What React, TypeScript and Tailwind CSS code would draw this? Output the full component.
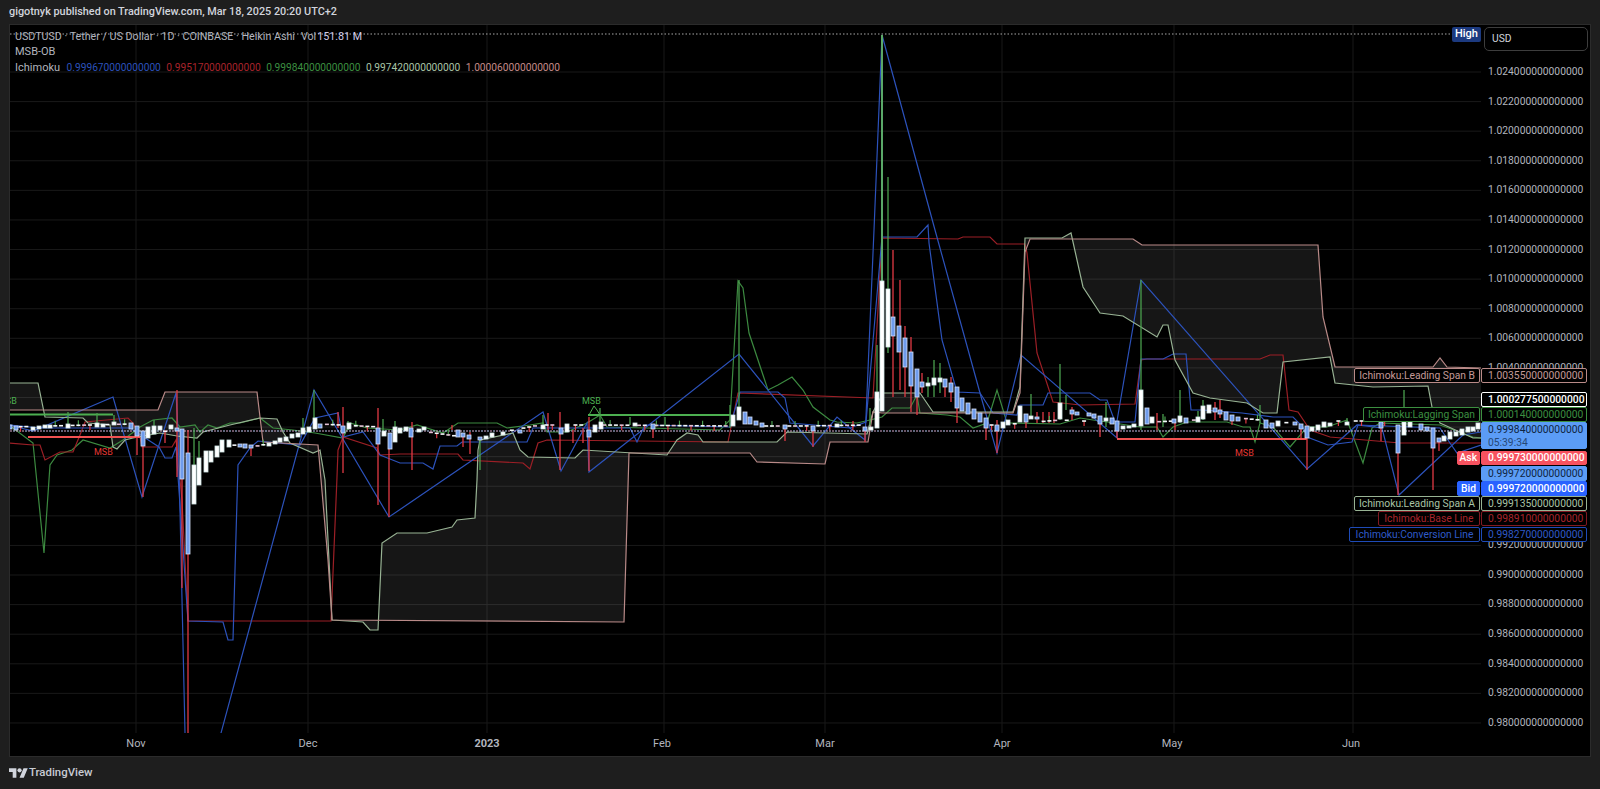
// App.tsx - published TradingView chart snapshot, USDTUSD with Ichimoku
import React from "react";

type Pt = string;

const SPAN_A: Pt =
  "9,383 38,383 45,417 83,418 88,423 110,425 113,447 117,449 125,440 133,438 160,433 177,436 197,438 203,432 230,425 260,418 277,419 283,432 290,443 313,453 320,450 325,480 332,620 363,622 370,630 378,630 382,543 397,533 427,533 452,527 457,520 475,518 477,480 478,450 480,440 513,433 520,450 528,457 575,458 583,450 667,455 677,440 687,433 698,435 703,442 777,442 787,432 867,434 873,412 883,393 920,393 933,412 1013,412 1020,387 1025,238 1062,238 1071,233 1083,287 1100,313 1123,316 1157,337 1163,325 1168,325 1175,360 1193,393 1210,398 1247,403 1263,413 1277,413 1283,362 1330,357 1335,383 1373,387 1428,386 1432,407 1440,423 1473,438 1481,438";
const SPAN_B: Pt =
  "9,410 158,410 165,392 257,392 263,442 318,445 328,560 332,620 624,622 629,453 650,453 750,453 757,462 825,464 830,442 868,442 873,412 882,413 1013,413 1020,393 1025,252 1030,239 1133,239 1142,245 1318,245 1323,317 1335,367 1433,367 1440,358 1447,367 1481,368";
const BASE: Pt =
  "9,443 33,445 40,445 45,460 60,452 73,452 80,435 85,422 128,418 133,423 140,437 142,447 172,447 176,440 182,500 188,621 331,621 337,477 338,450 343,437 377,448 380,455 400,454 458,454 463,460 523,463 530,469 538,443 547,440 728,442 738,393 873,398 882,238 958,239 963,237 990,237 997,244 1025,244 1027,253 1037,353 1053,402 1080,405 1135,404 1141,360 1147,359 1260,359 1270,355 1283,355 1289,410 1298,412 1308,427 1310,430 1330,437 1400,443 1481,443";
const LAGGING: Pt =
  "9,425 33,443 44,553 50,465 57,455 72,450 83,440 110,448 123,440 140,427 153,420 172,418 180,427 195,425 200,432 208,425 217,428 230,423 240,423 260,418 273,428 293,430 315,433 343,438 350,423 367,428 400,430 417,425 443,433 458,423 497,423 507,428 530,425 543,423 547,432 567,432 587,423 600,415 607,427 720,430 730,420 738,281 743,288 749,333 768,390 778,385 792,377 803,390 813,407 830,420 837,422 857,423 870,420 882,417 892,408 910,408 917,395 920,413 947,415 960,417 973,428 987,423 997,390 1007,423 1060,424 1080,418 1093,420 1107,422 1140,427 1157,427 1163,437 1173,427 1187,422 1227,422 1243,427 1250,427 1255,442 1260,423 1273,427 1290,447 1307,427 1327,427 1347,420 1363,463 1372,428 1380,423 1440,425 1473,437 1481,438";
const ZIGZAG: Pt =
  "9,425 33,431 113,397 142,497 176,393 178,430 180,510 185,733 185,760 221,760 221,733 314,390 389,517 543,412 561,471 587,423 589,472 739,354 813,446 837,417 850,428 865,440 874,230 882,35 935,230 980,393 997,453 1021,355 1117,438 1117,421 1141,280 1307,469 1357,425 1382,428 1399,495 1463,435 1481,432";
const STEPPED: Pt =
  "9,425 40,428 130,428 159,447 165,458 172,458 176,447 188,621 223,622 228,640 233,640 238,465 250,448 258,441 300,445 315,418 338,413 343,437 363,432 380,455 400,463 423,463 433,469 440,446 457,446 462,442 527,442 533,428 630,428 637,442 645,425 730,427 740,392 778,392 785,398 790,423 850,428 866,422 882,237 917,237 928,225 929,243 942,340 957,392 980,393 993,413 1017,415 1020,405 1043,405 1048,393 1067,393 1090,393 1100,400 1107,400 1115,422 1135,422 1141,359 1163,359 1173,354 1186,354 1191,410 1203,410 1242,413 1273,417 1293,417 1303,427 1307,437 1328,445 1352,442 1358,425 1440,428 1450,443 1457,453 1481,445";

// [x, top, bottom] in page pixels
const UP: number[][] = [
  [33,427,430],[39,426,429],[45,425,428],[50,425,428],[68,424,428],[97,423,427],[103,424,427],[114,422,425],[148,427,438],[154,426,434],[160,426,430],[171,425,429],[194,465,504],[199,458,485],[206,451,472],[211,451,462],[217,446,457],[222,440,452],[229,440,447],[269,443,446],[275,441,444],[280,438,442],[286,437,441],[292,434,438],[298,433,437],[303,428,434],[309,427,432],[315,418,429],[349,423,429],[384,431,436],[395,427,442],[400,428,433],[406,427,431],[419,429,432],[424,427,430],[486,436,439],[492,433,437],[503,432,435],[543,425,429],[567,424,432],[595,425,432],[601,422,429],[635,423,426],[733,415,426],[739,407,420],[837,424,427],[871,427,430],[877,392,428],[882,281,411],[888,289,347],[928,383,386],[934,378,385],[940,378,382],[1003,422,428],[1008,420,425],[1020,406,422],[1031,416,419],[1060,403,419],[1106,418,421],[1123,426,429],[1129,426,428],[1134,424,427],[1141,390,426],[1152,417,423],[1180,416,422],[1198,417,422],[1203,406,419],[1209,405,413],[1278,421,426],[1312,427,431],[1318,425,430],[1324,422,427],[1330,423,426],[1347,422,425],[1404,422,435],[1410,422,427],[1444,436,441],[1450,432,439],[1456,432,436],[1462,429,435],[1468,427,432],[1473,427,431],[1478,423,429],
];
const DOWN: number[][] = [
  [10,425,429],[16,426,430],[131,423,429],[137,426,436],[143,431,446],[177,428,431],[182,429,479],[188,453,554],[240,444,447],[245,444,448],[251,445,448],[320,424,428],[343,426,433],[378,428,444],[390,433,449],[411,428,437],[458,430,437],[463,433,437],[469,435,439],[480,437,440],[520,430,433],[561,428,434],[589,430,437],[653,424,429],[745,412,424],[750,417,424],[756,421,425],[762,423,427],[785,425,429],[813,426,431],[865,427,431],[893,317,336],[899,326,352],[905,338,367],[911,352,386],[917,369,397],[922,382,387],[945,379,387],[951,383,392],[957,387,408],[962,398,411],[968,403,414],[974,409,419],[980,413,422],[986,418,428],[997,425,431],[1026,414,422],[1037,417,419],[1072,410,414],[1077,412,415],[1089,413,416],[1094,414,418],[1100,416,424],[1112,418,424],[1117,421,431],[1147,408,424],[1174,419,423],[1186,418,423],[1215,408,412],[1220,410,414],[1226,412,420],[1232,415,421],[1238,417,421],[1266,420,428],[1272,423,428],[1295,422,425],[1301,424,429],[1307,426,438],[1381,422,428],[1398,425,453],[1421,424,430],[1427,427,431],[1433,428,448],[1439,438,442],
];
// [x, y1, y2]
const RED_WICKS: number[][] = [
  [137,436,455],[143,446,497],[165,430,443],[177,390,477],[182,479,588],[188,430,733],[251,448,456],[338,412,428],[343,407,473],[378,408,505],[389,448,517],[412,422,470],[452,425,430],[463,437,447],[470,432,454],[548,413,430],[560,412,470],[573,430,443],[583,428,443],[589,417,471],[653,429,438],[785,429,441],[813,431,447],[853,421,427],[865,431,442],[893,250,397],[900,280,390],[905,326,397],[911,337,412],[917,397,415],[922,373,393],[945,387,397],[951,377,402],[957,408,423],[986,428,440],[997,420,453],[1026,422,428],[1037,412,423],[1043,412,423],[1049,412,423],[1054,412,423],[1072,407,420],[1100,424,437],[1117,431,438],[1157,413,430],[1175,423,430],[1215,402,420],[1220,400,418],[1232,421,425],[1301,429,438],[1307,438,470],[1381,428,441],[1398,453,495],[1433,448,490],[1439,442,451],
];
const GREEN_WICKS: number[][] = [
  [68,412,424],[97,413,423],[114,415,422],[154,420,426],[194,428,465],[199,441,458],[303,418,428],[314,390,420],[348,421,430],[383,419,431],[395,421,427],[480,438,470],[543,415,425],[600,408,422],[630,417,425],[665,417,426],[739,280,407],[730,405,428],[870,408,425],[877,345,392],[888,177,353],[928,377,397],[934,360,397],[940,363,393],[1031,394,417],[1060,364,420],[1066,395,410],[1106,402,427],[1141,280,430],[1163,414,427],[1180,390,423],[1198,411,420],[1203,400,420],[1260,405,423],[1404,390,425],[1347,418,424],
];

// where the flat doji candles sit, by x
const FLOOR = [[9,427],[130,424],[230,445],[260,446],[320,424],[400,428],[470,438],[540,425],[600,425],[730,426],[800,426],[870,425],[1000,425],[1060,420],[1130,423],[1240,418],[1300,424],[1330,421],[1400,421],[1481,421]];

function floorAt(x: number) {
  for (let i = 1; i < FLOOR.length; i++) {
    if (x <= FLOOR[i][0]) {
      const [x0, y0] = FLOOR[i - 1];
      const [x1, y1] = FLOOR[i];
      return y0 + ((y1 - y0) * (x - x0)) / (x1 - x0);
    }
  }
  return 421;
}

const taken = [...UP, ...DOWN].map((c) => c[0]);
const DOJIS: { x: number; y: number; pink: boolean; wick: number }[] = [];
for (let i = 0; i < 255; i++) {
  const x = 9 + i * 5.78;
  if (taken.some((t) => Math.abs(t - x) < 3.2)) continue;
  DOJIS.push({ x, y: floorAt(x), pink: i % 3 === 1, wick: i % 4 });
}

const GRID_Y = Array.from({ length: 23 }, (_, i) => 72 + i * 29.59);
const GRID_X = [136, 308, 487, 664, 825, 1002, 1174, 1353];

const TICKS = [
  "1.024000000000000", "1.022000000000000", "1.020000000000000", "1.018000000000000",
  "1.016000000000000", "1.014000000000000", "1.012000000000000", "1.010000000000000",
  "1.008000000000000", "1.006000000000000", "1.004000000000000", "1.002000000000000",
  "1.000000000000000", "0.998000000000000", "0.996000000000000", "0.994000000000000",
  "0.992000000000000", "0.990000000000000", "0.988000000000000", "0.986000000000000",
  "0.984000000000000", "0.982000000000000", "0.980000000000000",
];

function Chart() {
  return (
    <svg viewBox="10 25 1471 708" className="block w-[1471px] h-[708px] overflow-hidden">
      {GRID_Y.map((y) => (
        <line key={y} x1="10" x2="1481" y1={y} y2={y} stroke="#191919" />
      ))}
      {GRID_X.map((x) => (
        <line key={x} x1={x} x2={x} y1="25" y2="733" stroke="#191919" />
      ))}

      {/* kumo */}
      <polygon
        points={SPAN_A + " " + SPAN_B.split(" ").reverse().join(" ")}
        fill="#ffffff"
        fillOpacity="0.085"
        fillRule="evenodd"
      />

      <polyline points={LAGGING} fill="none" stroke="#3c8a40" strokeWidth="1.2" />
      <polyline points={BASE} fill="none" stroke="#9c1f26" strokeWidth="1.2" />
      <polyline points={STEPPED} fill="none" stroke="#2c52bb" strokeWidth="1.2" />
      <polyline points={ZIGZAG} fill="none" stroke="#2c52bb" strokeWidth="1.2" />
      <polyline points={SPAN_A} fill="none" stroke="#98b394" strokeWidth="1.2" />
      <polyline points={SPAN_B} fill="none" stroke="#b98a88" strokeWidth="1.2" />

      {/* high and last price rules */}
      <line x1="10" x2="1452" y1="34" y2="34" stroke="#a8a8a8" strokeDasharray="1.5 2" />
      <line x1="10" x2="1481" y1="431" y2="431" stroke="#d8a8cc" strokeDasharray="2 4" />
      <line x1="13" x2="1481" y1="431" y2="431" stroke="#b8ccf8" strokeDasharray="2 4" />

      {/* order block lines */}
      <line x1="9" x2="113" y1="414.5" y2="414.5" stroke="#4caf50" strokeWidth="2" />
      <line x1="588" x2="730" y1="415" y2="415" stroke="#4caf50" strokeWidth="2" />
      <line x1="28" x2="140" y1="437" y2="437" stroke="#f25252" strokeWidth="2" />
      <line x1="1117" x2="1307" y1="439" y2="439" stroke="#f25252" strokeWidth="2" />
      <polyline points="589,415 594,406 597,410 600,415" fill="none" stroke="#4caf50" />
      <text x="-2" y="404" fill="#4caf50" className="text-[9px]">MSB</text>
      <text x="582" y="404" fill="#4caf50" className="text-[9px]">MSB</text>
      <text x="94" y="455" fill="#e53935" className="text-[9px]">MSB</text>
      <text x="1235" y="456" fill="#e53935" className="text-[9px]">MSB</text>

      {/* candles */}
      {RED_WICKS.map(([x, a, b]) => (
        <line key={`r${x}`} x1={x} x2={x} y1={a} y2={b} stroke="#e23a44" strokeWidth="1.3" />
      ))}
      {GREEN_WICKS.map(([x, a, b]) => (
        <line key={`g${x}`} x1={x} x2={x} y1={a} y2={b} stroke="#4a9f4e" strokeWidth="1.3" />
      ))}
      <line x1="882" x2="882" y1="35" y2="281" stroke="#5aa868" strokeWidth="2" />
      {DOJIS.map((d) => (
        <g key={d.x}>
          {d.wick === 0 && <line x1={d.x} x2={d.x} y1={d.y - 5} y2={d.y + 1} stroke="#4a9f4e" strokeWidth="1.2" />}
          {d.wick === 2 && <line x1={d.x} x2={d.x} y1={d.y} y2={d.y + 5} stroke="#e23a44" strokeWidth="1.2" />}
          <rect x={d.x - 2} y={d.y - 0.8} width="4" height="1.6" fill={d.pink ? "#e3bfd4" : "#f4f8fa"} />
        </g>
      ))}
      {UP.map(([x, t, b]) => (
        <rect key={`u${x}`} x={x - 2} y={t} width="4" height={b - t} fill="#ffffff" stroke="#cfe6e6" strokeWidth="0.8" />
      ))}
      {DOWN.map(([x, t, b]) => (
        <rect key={`d${x}`} x={x - 2} y={t} width="4" height={b - t} fill="#6f9cec" stroke="#d6e2f8" strokeWidth="0.8" />
      ))}
    </svg>
  );
}

function Legend() {
  return (
    <div className="absolute left-[5px] top-[4px] flex flex-col text-[11px] leading-[15.4px] text-[#b2b5be]">
      <div className="flex text-[10.7px]">
        <span>USDTUSD · Tether / US Dollar · 1D · COINBASE · Heikin Ashi</span>
        <span className="ml-[6px]">Vol</span>
        <span className="ml-[1px] text-[#cfcbe8]">151.81 M</span>
      </div>
      <div>MSB-OB</div>
      <div className="flex items-baseline gap-[5.5px]">
        <span className="mr-[1px]">Ichimoku</span>
        <span className="text-[10.2px] text-[#2c52bb]">0.999670000000000</span>
        <span className="text-[10.2px] text-[#a8242c]">0.995170000000000</span>
        <span className="text-[10.2px] text-[#3c8f40]">0.999840000000000</span>
        <span className="text-[10.2px] text-[#a9c4a6]">0.997420000000000</span>
        <span className="text-[10.2px] text-[#c48a88]">1.000060000000000</span>
      </div>
    </div>
  );
}

interface TagProps {
  name?: string;
  value: string;
  sub?: string;
  nameClass?: string;
  valueClass: string;
  rowClass: string;
}

// one overlay row on the price scale: optional title + value box
const Tag: React.FC<TagProps> = ({ name, value, sub, nameClass, valueClass, rowClass }) => (
  <div className={`flex items-stretch justify-end whitespace-nowrap ${rowClass}`}>
    {name && (
      <div className={`mr-[1px] flex items-center rounded-[2px] border ${nameClass}`}>{name}</div>
    )}
    <div className={`flex w-[106px] flex-col justify-center rounded-[2px] border pl-[6px] ${valueClass}`}>
      <span>{value}</span>
      {sub && <span className="opacity-70">{sub}</span>}
    </div>
  </div>
);

function PriceScale() {
  return (
    <div className="relative w-[109px] shrink-0 text-[10.3px] text-[#b2b5be]">
      <div className="flex flex-col pt-[32px]">
        {TICKS.map((t) => (
          <div key={t} className="flex h-[29.59px] items-center pl-[7px]">{t}</div>
        ))}
      </div>

      <div className="absolute left-[3px] top-[2px] flex h-[24px] w-[104px] items-center rounded-[5px] border border-[#3d3d3d] bg-black pl-[7px] text-[#d1d4dc]">
        USD
      </div>

      <div className="absolute right-[3px] top-[343px] flex flex-col">
        <Tag
          name="Ichimoku:Leading Span B"
          value="1.003550000000000"
          rowClass="h-[15px]"
          nameClass="px-[4px] border-[#b98a88] bg-black text-[#c49a98]"
          valueClass="border-[#b98a88] bg-black text-[#c49a98]"
        />
        <Tag
          value="1.000277500000000"
          rowClass="mt-[9px] h-[15px] font-medium"
          valueClass="border-white bg-black text-white"
        />
        <Tag
          name="Ichimoku:Lagging Span"
          value="1.000140000000000"
          rowClass="h-[15px]"
          nameClass="px-[4px] border-[#3c8f40] bg-black text-[#3c8f40]"
          valueClass="border-[#3c8f40] bg-black text-[#3c8f40]"
        />
        <Tag
          value="0.999840000000000"
          sub="05:39:34"
          rowClass="h-[27px] leading-[13px]"
          valueClass="border-[#5b9cf6] bg-[#5b9cf6] text-[#0f2440]"
        />
        <Tag
          name="Ask"
          value="0.999730000000000"
          rowClass="mt-[2px] h-[14px] font-medium"
          nameClass="px-[2px] border-[#f7525f] bg-[#f7525f] text-white"
          valueClass="border-[#f7525f] bg-[#f7525f] text-white"
        />
        <Tag
          value="0.999720000000000"
          rowClass="mt-[1px] h-[15px]"
          valueClass="border-[#5b9cf6] bg-[#5b9cf6] text-[#0f2440]"
        />
        <Tag
          name="Bid"
          value="0.999720000000000"
          rowClass="h-[15px] font-medium"
          nameClass="px-[3px] border-[#2962ff] bg-[#2962ff] text-white"
          valueClass="border-[#2962ff] bg-[#2962ff] text-white"
        />
        <Tag
          name="Ichimoku:Leading Span A"
          value="0.999135000000000"
          rowClass="h-[15px]"
          nameClass="px-[4px] border-[#98b394] bg-black text-[#a9c4a6]"
          valueClass="border-[#98b394] bg-black text-[#a9c4a6]"
        />
        <Tag
          name="Ichimoku:Base Line"
          value="0.998910000000000"
          rowClass="h-[15px]"
          nameClass="px-[5.5px] border-[#801922] bg-black text-[#a8242c]"
          valueClass="border-[#801922] bg-black text-[#a8242c]"
        />
        <Tag
          name="Ichimoku:Conversion Line"
          value="0.998270000000000"
          rowClass="mt-[1px] h-[15px]"
          nameClass="px-[5.5px] border-[#1e4bb8] bg-black text-[#2f5ac8]"
          valueClass="border-[#1e4bb8] bg-black text-[#2f5ac8]"
        />
      </div>
    </div>
  );
}

function TimeAxis() {
  return (
    <div className="flex h-[23px] items-center text-[11px] text-[#b2b5be]">
      <span className="ml-[96px] w-[60px] text-center">Nov</span>
      <span className="ml-[112px] w-[60px] text-center">Dec</span>
      <span className="ml-[119px] w-[60px] text-center font-bold">2023</span>
      <span className="ml-[115px] w-[60px] text-center">Feb</span>
      <span className="ml-[103px] w-[60px] text-center">Mar</span>
      <span className="ml-[117px] w-[60px] text-center">Apr</span>
      <span className="ml-[110px] w-[60px] text-center">May</span>
      <span className="ml-[119px] w-[60px] text-center">Jun</span>
    </div>
  );
}

export default function App() {
  return (
    <div className="flex h-[789px] w-[1600px] flex-col overflow-hidden bg-[#1e1e1e] font-[Roboto,sans-serif]">
      <div className="flex h-[24px] items-center pl-[9px] text-[10.85px] font-medium text-[#d1d4dc]">
        gigotnyk published on TradingView.com, Mar 18, 2025 20:20 UTC+2
      </div>

      <div className="mx-[9px] flex h-[733px] border border-[#2b2b2b] bg-black">
        <div className="flex w-[1471px] flex-col">
          <div className="relative h-[708px]">
            <Chart />
            <Legend />
            <div className="absolute right-0 top-[2px] flex h-[15px] w-[29px] items-center justify-center rounded-[2px] bg-[#1c3a80] text-[11px] font-medium text-white">
              High
            </div>
          </div>
          <TimeAxis />
        </div>
        <PriceScale />
      </div>

      <div className="flex flex-1 items-center gap-[1px] pl-[9px]">
        <svg viewBox="0 4 36 18" className="h-[10px] w-[19px]" fill="#d1d4dc">
          <path d="M14 22H7V11H0V4h14v18zM28 22h-8l7.5-18h8L28 22z" />
          <circle cx="20" cy="8" r="4" />
        </svg>
        <span className="text-[11.4px] font-medium text-[#c8cbd3]">TradingView</span>
      </div>
    </div>
  );
}
